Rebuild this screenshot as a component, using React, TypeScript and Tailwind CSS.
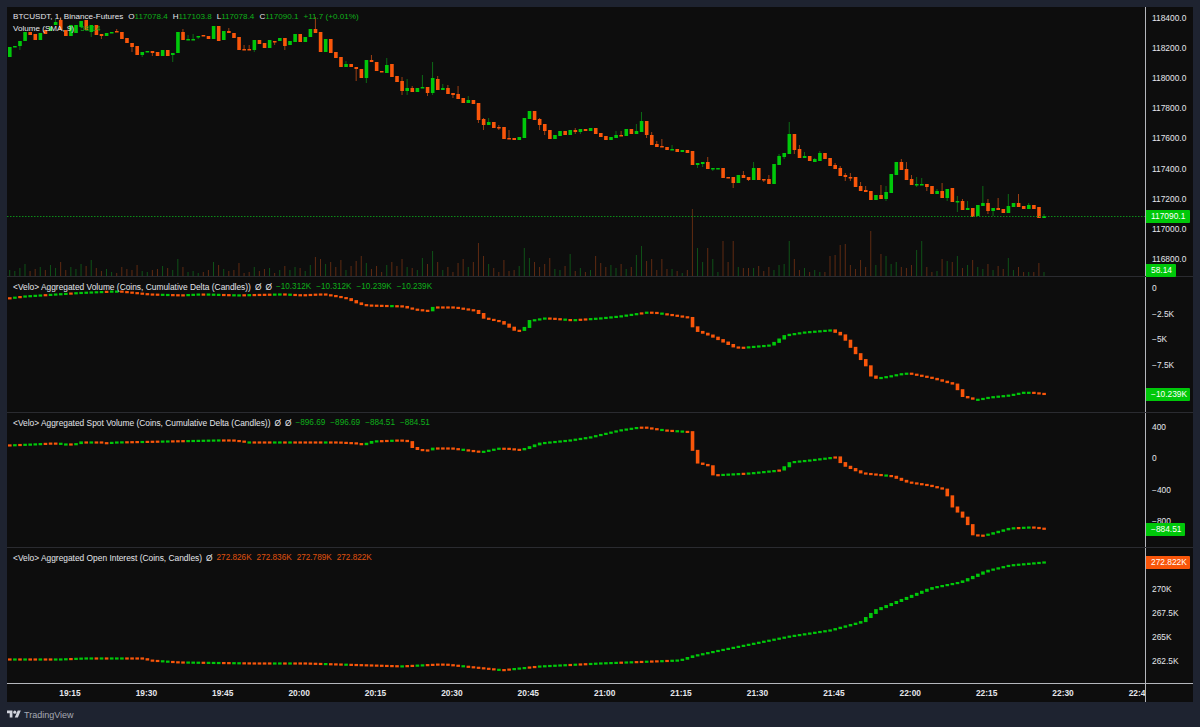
const GREEN = '#00c80a'
const RED = '#f9560a'
const GREEN_DIM = '#0c6a16'
const RED_DIM = '#9c3f14'
const VOL_GREEN = '#0f5218'
const VOL_RED = '#5f2b12'

// up, top, bottom, high, low (page pixels)
type Candle = [number, number, number, number?, number?]

const CANDLES: Candle[] = [
  [1,47,57],[1,46,47],[1,41,46,0,50],[1,32,41],[0,32,35],[0,34,40],[1,33,40],[0,30,34],[1,27,31],[1,22,25,19],
  [0,20,30,17],[0,30,36],[1,25,36],[1,25,33],[1,21,27],[0,20,30],[1,25,32,0,37],[0,25,35],[0,34,36,0,39],[1,33,36],
  [1,32,33],[0,31,32,29],[0,32,39],[0,38,43],[0,43,47,0,52],[0,46,55],[1,52,55,0,57],[1,51,52],[0,51,53,0,56],[0,52,56],
  [1,50,56],[0,50,56],[1,53,55,0,62],[1,32,53],[0,32,40,29],[1,39,40,35],[1,39,40,34],[1,36,37,0,39],[0,35,36],[0,36,39],
  [1,26,39],[0,26,41],[1,31,40],[0,31,33,28],[0,33,38],[0,37,50],[0,49,50,45],[0,49,50,45],[1,40,50,0,52],[0,40,44],
  [0,43,48],[1,40,48],[0,41,42,0,45],[1,38,41],[0,38,46,0,50],[1,41,45],[1,34,42],[0,34,42],[1,37,42],[1,29,37],
  [0,29,33,17],[0,32,52],[1,39,52],[0,39,53],[0,52,58],[0,57,67],[1,64,67,61],[0,64,67],[0,67,69,0,81],[0,69,78],
  [1,60,78,0,83],[0,60,62,55],[0,62,71],[0,71,72],[1,65,73,58],[0,64,77],[0,76,82],[0,81,91,77,95],[1,88,91,79,95],[0,88,92,86],
  [1,88,92],[1,87,88,75],[0,87,93,0,96],[1,78,93,62,95],[0,79,90,76],[1,88,90,84],[0,88,94,85],[0,93,95,0,98],[0,94,99,86],[0,98,103],
  [1,100,103,96],[0,100,104],[0,103,120,0,123],[0,119,125,118,130],[1,122,125,118],[0,122,128],[0,127,128,125,130],[0,127,139],[0,138,139,130],[0,138,140],
  [1,137,140],[1,118,138],[1,111,119],[0,111,120],[0,119,125,118,130],[0,124,131,0,135],[0,130,139],[1,135,139],[1,131,136],[0,131,135],
  [1,130,135],[0,130,132,128,134],[1,129,132,0,134],[0,129,131],[1,128,131],[0,128,134],[0,133,137],[0,136,140],[1,137,140],[1,135,138,131],
  [0,135,136,131],[1,129,136],[0,129,134],[1,131,134,124],[1,121,132,112],[0,121,135,0,138],[0,135,145,132],[0,144,147,141],[0,146,147,139],[0,147,150],
  [1,149,150,145],[0,149,152],[1,150,152],[0,150,153],[0,151,165],[1,163,165,0,168],[1,162,164,0,167],[0,162,169,157],[1,168,169,0,171],[1,168,169],
  [0,168,178],[0,177,178],[0,177,183,0,188],[1,175,183],[0,175,178,171],[0,177,180,0,181],[1,168,180,162],[0,168,180],[0,179,180,0,182],[0,179,184,175],
  [1,164,184],[1,156,165,154],[1,153,157,0,159],[1,134,154,122],[0,134,150,0,154],[0,149,158,145],[1,156,158,152],[0,156,161],[1,159,162,158],[1,153,161,151],
  [0,153,159],[0,158,166],[0,165,169,163],[0,168,176,166],[0,175,177,173,181],[0,177,178,173,181],[0,177,187],[0,186,191,182],[0,190,192,186],[0,191,200],
  [1,195,200],[0,195,199,185],[1,192,199,186,201],[1,174,193],[1,162,175],[0,162,170,159],[0,169,180,162],[0,179,185,175],[1,184,185,177,187],[1,184,185,178],
  [0,184,187,0,191],[0,186,194],[1,191,194,189],[0,191,198,183],[1,189,198,0,201],[0,188,202],[1,201,202,196,212],[0,201,210,199],[1,208,210,201],[0,208,217],
  [1,205,216],[1,203,206,186],[0,203,211,199,214],[1,208,211,0,216],[0,208,210,198],[0,209,213],[1,206,213,194],[1,203,207],[0,203,207,194],[0,206,209],
  [1,205,209,203],[0,205,209],[0,207,218],[1,216,218,214],
]

const VOLUMES = [
  6,5,8,12,5,7,9,6,11,8,14,6,9,7,12,10,16,8,5,7,4,3,9,7,6,11,5,4,6,7,
  10,8,6,17,9,4,5,3,4,6,14,11,7,5,6,13,3,4,9,5,7,8,3,6,10,6,9,8,5,11,
  19,17,12,14,9,16,6,10,15,20,13,7,10,4,11,14,10,17,9,8,6,18,12,25,14,6,9,4,13,17,
  9,14,33,20,12,8,4,16,5,6,10,28,18,14,9,12,18,7,6,10,22,5,8,4,6,20,13,9,11,8,
  12,7,9,21,30,15,17,6,17,7,7,5,3,6,67,28,14,28,17,4,35,14,35,9,8,8,8,10,5,9,
  6,11,12,35,17,6,8,4,6,4,4,20,21,31,32,11,7,16,9,45,11,22,20,12,14,9,8,11,26,35,
  9,4,5,17,15,14,20,8,11,16,9,7,12,6,10,7,18,6,9,4,4,4,13,4,
]

const DELTA_KEYS: number[][] = [
  [8,298],[25,296],[80,292.5],[115,291],[135,293],[145,294],[180,295],[200,294],[235,295],[280,294],[300,295],[320,294],[333,296],[347,299],[356,303],[362,305],[400,306],[410,309],[428,311],[433,307],[450,307],[476,311],[482,318],[500,322],[515,331],[523,330],[527,321],[545,318],[570,320],[600,318],[620,316],[648,312],[670,315],[690,318],[693,330],[710,336],[735,348],[770,345],[785,335],[805,332],[830,330],[842,336],[852,350],[865,365],[872,379],[890,376],[905,373],[930,378],[955,385],[960,396],[975,400],[990,397],[1010,395],[1025,392],[1044,394],
]
const SPOT_KEYS: number[][] = [
  [8,445],[33,444],[53,443],[60,444],[75,444],[80,442],[97,442],[103,443],[117,442],[218,440],[228,440],[238,441],[243,442],[333,442],[353,443],[362,445],[367,443],[373,441],[400,440],[408,442],[413,449],[420,450],[428,450],[433,448],[447,448],[480,452],[500,448],[520,450],[540,443],[570,440],[590,437],[620,430],[640,427],[660,430],[691,432],[693,462],[708,466],[712,475],[750,473],[780,470],[790,462],[810,460],[835,457],[842,465],[860,473],[890,476],[905,482],[925,485],[945,490],[950,505],[965,520],[973,536],[985,535],[1010,528],[1030,527],[1044,529],
]
const OI_KEYS: number[][] = [
  [8,659],[60,659],[85,658],[140,658],[145,660],[175,662],[250,663],[300,663],[400,666],[440,664],[500,670],[540,666],[600,663],[680,660],[692,656],[720,650],[760,642],[790,636],[830,630],[860,622],[875,610],[900,600],[930,588],[960,582],[985,571],[1010,565],[1044,562],
]

const candleX = (i: number) => 8 + i * 5.095

const noise = (i: number) => {
  const v = Math.sin(i * 12.9898) * 43758.5453
  return v - Math.floor(v) - 0.5
}

const lookup = (keys: number[][], x: number) => {
  for (let k = 1; k < keys.length; k++) {
    if (x <= keys[k][0]) {
      const [x0, y0] = keys[k - 1]
      const [x1, y1] = keys[k]
      return y0 + ((x - x0) / (x1 - x0)) * (y1 - y0)
    }
  }
  return keys[keys.length - 1][1]
}

function MainSeries() {
  const bottom = 276
  return (
    <>
      {CANDLES.map((c, i) => {
        const x = candleX(i)
        const [up, top, bot, high, low] = c
        const wick = up ? GREEN_DIM : RED_DIM
        const vol = VOLUMES[i] ?? 4
        return (
          <g key={i}>
            <rect x={x + 1.2} y={bottom - vol} width={1} height={vol} fill={up ? VOL_GREEN : VOL_RED} />
            {high ? <rect x={x + 1.2} y={high} width={1} height={top - high} fill={wick} /> : null}
            {low ? <rect x={x + 1.2} y={bot} width={1} height={low - bot} fill={wick} /> : null}
            <rect x={x} y={top} width={3.6} height={Math.max(bot - top, 1.5)} fill={up ? GREEN : RED} />
          </g>
        )
      })}
      <line x1={7} x2={1145} y1={216.5} y2={216.5} stroke="#0c8a18" strokeWidth={1} strokeDasharray="1.5 1.5" />
    </>
  )
}

function LineCandles({ keys, steadyFrom }: { keys: number[][]; steadyFrom?: number }) {
  const closes: number[] = []
  for (let i = 0; i <= 203; i++) {
    closes.push(lookup(keys, candleX(i) + 1.5))
  }
  return (
    <>
      {closes.map((close, i) => {
        const open = i === 0 ? close + 0.5 : closes[i - 1]
        const x = candleX(i)
        // flat stretches mix colours, steep ones follow the move
        const steady = steadyFrom !== undefined && x > steadyFrom
        const up = open - close + (steady ? 0.2 : noise(i) * 1.6) > 0
        const top = Math.min(open, close) - 0.6
        const h = Math.max(Math.abs(open - close) + 1, 2.2)
        return <rect key={i} x={x} y={top} width={3.6} height={h} fill={up ? GREEN : RED} />
      })}
    </>
  )
}

function Val({ children, red }: { children: string; red?: boolean }) {
  return <span className={red ? 'text-[#e0520f]' : 'text-[#0db01a]'}>{children}</span>
}

function VeloLegend({ name, marks, values, red }: { name: string; marks: number; values: string[]; red?: boolean }) {
  return (
    <div className="absolute left-[6px] flex items-center gap-[5px] whitespace-nowrap text-[#e4e6eb]">
      <span className="mr-[-1px]">{name}</span>
      {Array.from({ length: marks }).map((_, i) => (
        <span key={i} className="mr-[-1px]">
          Ø
        </span>
      ))}
      {values.map((v, i) => (
        <span key={i} className="text-[8.2px]">
          <Val red={red}>{v}</Val>
        </span>
      ))}
    </div>
  )
}

function PriceTag({ text, width, top, red }: { text: string; width: string; top: string; red?: boolean }) {
  return (
    <div
      className={`absolute left-0 flex h-[13px] items-center rounded-r-[1px] pl-[5px] leading-none text-white ${width} ${top} ${
        red ? 'bg-[#f9560a]' : 'bg-[#00c80a]'
      }`}
    >
      {text}
    </div>
  )
}

function Axis({ labels, className, step }: { labels: string[]; className: string; step: string }) {
  return (
    <div className={`flex flex-col ${className}`}>
      {labels.map((l) => (
        <div key={l} className={`flex items-center pl-[6px] text-[#e4e6eb] ${step}`}>
          {l}
        </div>
      ))}
    </div>
  )
}

const TIMES = ['19:15', '19:30', '19:45', '20:00', '20:15', '20:30', '20:45', '21:00', '21:15', '21:30', '21:45', '22:00', '22:15', '22:30', '22:45']

export default function App() {
  return (
    <div className="flex h-[727px] w-[1200px] flex-col overflow-hidden bg-[#1e2330] pl-[7px] pr-[7px] pt-[7px] text-[8.4px] leading-[12px] [font-family:'Liberation_Sans',sans-serif]">
      <div className="flex h-[695px] flex-col bg-[#0d0d0d]">
        {/* price pane */}
        <div className="flex h-[270px] border-b border-[#2a2b30]">
          <div className="relative flex-1">
            <svg className="block h-full w-full" viewBox="7 7 1138 269">
              <MainSeries />
            </svg>
            <div className="absolute left-[6px] top-[4px] flex flex-col whitespace-nowrap text-[8.1px] text-[#e4e6eb]">
              <div className="flex h-[12px] gap-[5px]">
                <span>BTCUSDT, 1, Binance-Futures</span>
                <span>
                  O<Val>117078.4</Val>
                </span>
                <span>
                  H<Val>117103.8</Val>
                </span>
                <span>
                  L<Val>117078.4</Val>
                </span>
                <span>
                  C<Val>117090.1</Val>
                </span>
                <Val>+11.7 (+0.01%)</Val>
              </div>
              <div className="flex h-[12px] gap-[6px]">
                <span>Volume (SMA, 9)</span>
                <Val>58.14</Val>
              </div>
            </div>
          </div>
          <div className="relative w-[48px] border-l-[1.5px] border-[#b4b6bc]">
            <Axis
              className="mt-[-4px]"
              step="h-[30.1px]"
              labels={['118400.0', '118200.0', '118000.0', '117800.0', '117600.0', '117400.0', '117200.0', '117000.0', '116800.0']}
            />
            <PriceTag text="117090.1" width="w-[44px]" top="top-[203px]" />
            <PriceTag text="58.14" width="w-[30px]" top="top-[257px]" />
          </div>
        </div>

        {/* aggregated volume */}
        <div className="flex h-[136px] border-b border-[#2a2b30]">
          <div className="relative flex-1">
            <svg className="block h-full w-full" viewBox="7 277 1138 135">
              <LineCandles keys={DELTA_KEYS} />
            </svg>
            <div className="absolute inset-x-0 top-[4px]">
              <VeloLegend
                name="<Velo> Aggregated Volume (Coins, Cumulative Delta (Candles))"
                marks={2}
                values={['−10.312K', '−10.312K', '−10.239K', '−10.239K']}
              />
            </div>
          </div>
          <div className="relative w-[48px] border-l-[1.5px] border-[#b4b6bc]">
            <Axis className="mt-[-2px]" step="h-[25.7px]" labels={['0', '−2.5K', '−5K', '−7.5K']} />
            <PriceTag text="−10.239K" width="w-[44px]" top="top-[111px]" />
          </div>
        </div>

        {/* aggregated spot volume */}
        <div className="flex h-[135px] border-b border-[#2a2b30]">
          <div className="relative flex-1">
            <svg className="block h-full w-full" viewBox="7 413 1138 134">
              <LineCandles keys={SPOT_KEYS} />
            </svg>
            <div className="absolute inset-x-0 top-[4px]">
              <VeloLegend
                name="<Velo> Aggregated Spot Volume (Coins, Cumulative Delta (Candles))"
                marks={2}
                values={['−896.69', '−896.69', '−884.51', '−884.51']}
              />
            </div>
          </div>
          <div className="relative w-[48px] border-l-[1.5px] border-[#b4b6bc]">
            <Axis className="mt-[-1.7px]" step="h-[31.4px]" labels={['400', '0', '−400', '−800']} />
            <PriceTag text="−884.51" width="w-[39px]" top="top-[110px]" />
          </div>
        </div>

        {/* open interest */}
        <div className="flex h-[135px]">
          <div className="relative flex-1">
            <svg className="block h-full w-full" viewBox="7 548 1138 135">
              <LineCandles keys={OI_KEYS} steadyFrom={690} />
            </svg>
            <div className="absolute inset-x-0 top-[4px]">
              <VeloLegend
                name="<Velo> Aggregated Open Interest (Coins, Candles)"
                marks={1}
                values={['272.826K', '272.836K', '272.789K', '272.822K']}
                red
              />
            </div>
          </div>
          <div className="relative w-[48px] border-l-[1.5px] border-[#b4b6bc]">
            <Axis className="mt-[29px]" step="h-[24px]" labels={['270K', '267.5K', '265K', '262.5K']} />
            <PriceTag text="272.822K" width="w-[44px]" top="top-[8px]" red />
          </div>
        </div>

        {/* time axis */}
        <div className="flex h-[19px] flex-none border-t-[1.5px] border-[#b4b6bc]">
          <div className="flex flex-1 items-center overflow-hidden pl-[24.75px] font-bold text-[#e4e6eb]">
            {TIMES.map((t) => (
              <div key={t} className="w-[76.4px] flex-none text-center">
                {t}
              </div>
            ))}
          </div>
          <div className="w-[48px] border-l-[1.5px] border-[#b4b6bc]" />
        </div>
      </div>

      <div className="flex h-[25px] items-center gap-[3px] text-[9px] text-[#a6a9b2]">
        <svg width="14" height="11" viewBox="0 0 36 28" fill="#d1d4dc">
          <path d="M14 22H7V11H0V4h14v18zM28 22h-8l7.5-18h8L28 22z" />
          <circle cx="20" cy="8" r="4" />
        </svg>
        <span>TradingView</span>
      </div>
    </div>
  )
}
